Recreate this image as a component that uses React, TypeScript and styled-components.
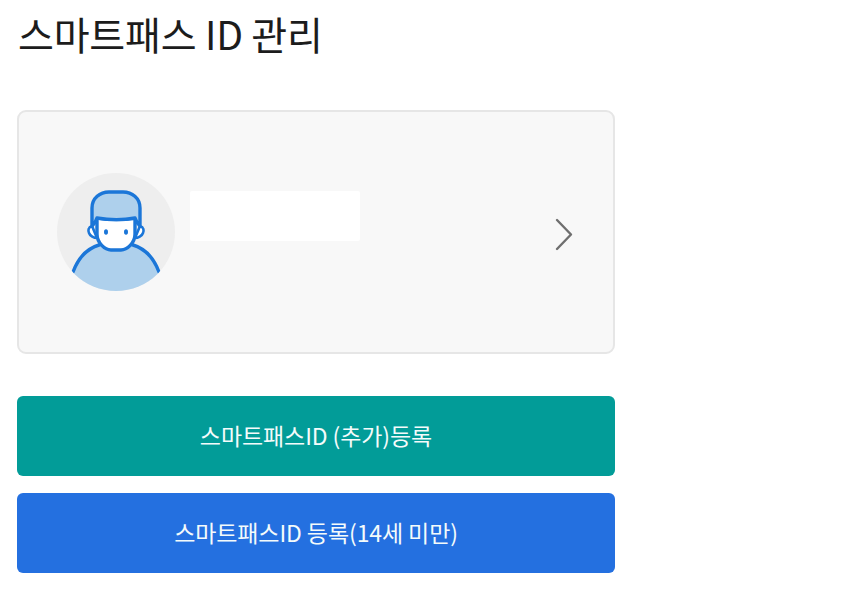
import React from 'react'
import styled, { createGlobalStyle } from 'styled-components'

const GlobalStyle = createGlobalStyle`
  html, body {
    margin: 0;
    padding: 0;
    background: #fff;
  }
  body {
    font-family: "Noto Sans CJK KR", "Noto Sans", sans-serif;
  }
`

const Page = styled.div`
  width: 598px;
  padding: 5px 0 0 17px;
  display: flex;
  flex-direction: column;
`

const Title = styled.h1`
  margin: 0 0 48px;
  padding-left: 1px;
  height: 57px;
  font-size: 39px;
  line-height: 57px;
  font-weight: 400;
  color: #1c1c1c;
  letter-spacing: -0.2px;
  white-space: nowrap;
`

const Card = styled.div`
  box-sizing: border-box;
  height: 244px;
  display: flex;
  align-items: center;
  padding: 0 39px 0 37px;
  background: #f8f8f8;
  border: 2px solid #e6e6e6;
  border-radius: 9px;
`

const Avatar = styled.svg`
  width: 120px;
  height: 120px;
  flex: none;
`

const NameMask = styled.div`
  width: 170px;
  height: 50px;
  margin: 0 auto 33px 14px;
  background: #fff;
  border-radius: 2px;
`

const Chevron = styled.svg`
  width: 20px;
  height: 33px;
  margin-top: 5px;
  flex: none;
`

const Actions = styled.div`
  display: flex;
  flex-direction: column;
  gap: 17px;
  margin-top: 42px;
`

const ActionButton = styled.button<{ $color: string }>`
  height: 80px;
  border: 0;
  border-radius: 6px;
  padding: 0 0 2px;
  background: ${(p) => p.$color};
  color: #f4fbfb;
  font-family: inherit;
  font-size: 23px;
  font-weight: 400;
  letter-spacing: -0.1px;
`

const App: React.FunctionComponent = () => {
  return (
    <>
      <GlobalStyle />
      <Page>
        <Title>스마트패스 ID 관리</Title>
        <Card>
          <Avatar viewBox="0 0 120 120">
            <defs>
              <clipPath id="avatar-clip">
                <circle cx="60" cy="60" r="59" />
              </clipPath>
            </defs>
            <circle cx="60" cy="60" r="59" fill="#eeeeee" />
            <g clipPath="url(#avatar-clip)" stroke="#1b76d8" strokeWidth="3.4" strokeLinejoin="round" strokeLinecap="round">
              <path d="M17 100C23 84 34 75 43 73H77C86 75 97 84 103 100L103 125H17Z" fill="#aed0ec" stroke="none" />
              <path d="M17 100C23 84 33 76 43 73M103 100C97 84 87 76 77 73" fill="none" />
              <path d="M36 54C32 55 32 59 33 61C34 64 38 66 41 66ZM84 54C88 55 88 59 87 61C86 64 82 66 79 66Z" fill="#fff" strokeWidth="2.6" />
              <path d="M41 46V62C41 71 49 78 55 78H65C71 78 79 71 79 62V46C68 48 53 48 41 46Z" fill="#fff" />
              <path d="M36 54V36C36 26 44 20 53 20H67C76 20 84 26 84 36V54C82 52 80 50 79 46C68 48 53 48 41 46C40 50 38 52 36 54Z" fill="#aed0ec" />
            </g>
            <ellipse cx="50" cy="60" rx="2" ry="2.8" fill="#1b76d8" />
            <ellipse cx="70" cy="60" rx="2" ry="2.8" fill="#1b76d8" />
          </Avatar>
          <NameMask />
          <Chevron viewBox="0 0 20 33" fill="none">
            <path d="M3 2L17 16.5L3 31" stroke="#6f6f6f" strokeWidth="2.4" strokeLinecap="round" strokeLinejoin="round" />
          </Chevron>
        </Card>
        <Actions>
          <ActionButton $color="#029c98">스마트패스ID (추가)등록</ActionButton>
          <ActionButton $color="#2470e0">스마트패스ID 등록(14세 미만)</ActionButton>
        </Actions>
      </Page>
    </>
  )
}

export default App
